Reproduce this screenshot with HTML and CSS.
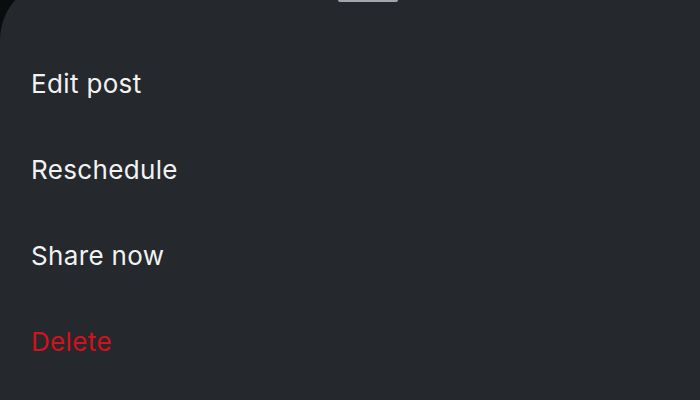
FILE: index.html
```html
<!DOCTYPE html>
<html>
<head>
<meta charset="utf-8">
<link rel="stylesheet" href="styles.css">
</head>
<body>
<div class="sheet">
  <div class="handle"></div>
  <ul class="menu">
    <li class="item">Edit post</li>
    <li class="item">Reschedule</li>
    <li class="item">Share now</li>
    <li class="item danger">Delete</li>
  </ul>
</div>
</body>
</html>
```
FILE: styles.css
```css
html, body {
  margin: 0;
  padding: 0;
  background: #0b0c0e;
  width: 700px;
  height: 400px;
  overflow: hidden;
}
.sheet {
  margin-top: -20px;
  height: 440px;
  background: #25282d;
  border-top-left-radius: 60px 60px;
  display: flex;
  flex-direction: column;
  font-family: Inter, "Noto Sans", sans-serif;
}
.handle {
  align-self: flex-start;
  margin-left: 338px;
  width: 60px;
  height: 22px;
  border-radius: 2px;
  background: #a3a6ad;
}
.menu {
  list-style: none;
  margin: 0;
  padding: 39px 0 0 31px;
  display: flex;
  flex-direction: column;
  gap: 0;
}
.item {
  height: 86px;
  line-height: 86px;
  font-size: 26px;
  letter-spacing: 0.35px;
  color: #f2f2f2;
}
.item.danger {
  color: #d2121c;
}
```
